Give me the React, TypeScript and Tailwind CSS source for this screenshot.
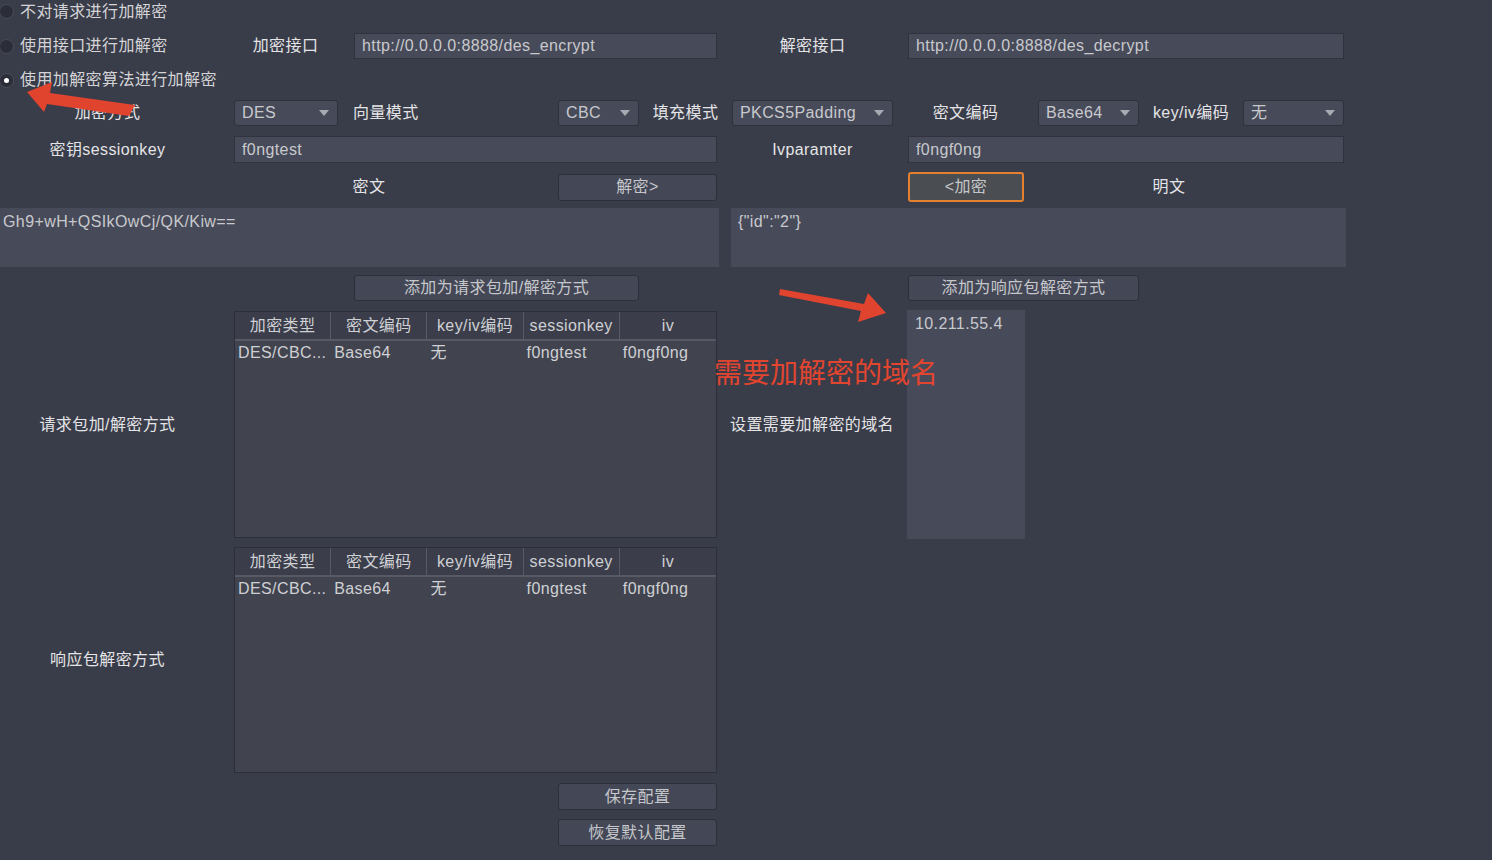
import React from 'react';

const FONT = "font-['Liberation_Sans','Noto_Sans_CJK_SC',sans-serif]";

function Radio({ checked = false, label }: { checked?: boolean; label: string }) {
  return (
    <div className="flex items-center gap-[6px]">
      <span className="flex h-[15px] w-[15px] -ml-[1px] items-center justify-center rounded-full border border-[#4b4e59] bg-[#2b2e39]">
        {checked && <span className="h-[5px] w-[5px] rounded-full bg-white" />}
      </span>
      <span className="text-[#d4d4d6]">{label}</span>
    </div>
  );
}

function Label({ w, text, className = '' }: { w: string; text: string; className?: string }) {
  return (
    <div className={`flex h-full shrink-0 items-center justify-center text-[#e4e4e6] ${w} ${className}`}>
      {text}
    </div>
  );
}

function Input({ w, value }: { w: string; value: string }) {
  return (
    <div className={`flex h-full shrink-0 items-center border border-[#30333e] bg-[#474a59] px-[7px] text-[#c8c9cd] ${w}`}>
      {value}
    </div>
  );
}

function Select({ w, value }: { w: string; value: string }) {
  return (
    <div className={`flex h-full shrink-0 items-center justify-between rounded-[3px] border border-[#2e313c] bg-[#474a59] pl-[7px] pr-[8px] text-[#c8c9cd] ${w}`}>
      <span>{value}</span>
      <svg width="10" height="6" viewBox="0 0 10 6">
        <path d="M0 0 L10 0 L5 6 Z" fill="#a8aab2" />
      </svg>
    </div>
  );
}

function Button({ w, text, h = 'h-[27px]' }: { w: string; text: string; h?: string }) {
  return (
    <div className={`flex shrink-0 items-center justify-center rounded-[3px] border border-[#2c2f3a] bg-[#444756] text-[#c6c7cb] ${w} ${h}`}>
      {text}
    </div>
  );
}

const HEADERS = ['加密类型', '密文编码', 'key/iv编码', 'sessionkey', 'iv'];
const ROW = ['DES/CBC...', 'Base64', '无', 'f0ngtest', 'f0ngf0ng'];

function Table() {
  return (
    <div className="flex h-full w-[483px] shrink-0 flex-col border border-[#2c2f3a] bg-[#41444f]">
      <div className="grid h-[29px] grid-cols-5 border-b-2 border-[#575a65] bg-[#3b3e4a]">
        {HEADERS.map((h, i) => (
          <div
            key={h}
            className={`flex items-center justify-center text-[#cfd0d4] ${i < 4 ? 'border-r border-[#575a65]' : ''}`}
          >
            {h}
          </div>
        ))}
      </div>
      <div className="grid h-[24px] grid-cols-5">
        {ROW.map((c) => (
          <div key={c} className="flex items-center overflow-hidden whitespace-nowrap pl-[3px] text-[#cfd0d4]">
            {c}
          </div>
        ))}
      </div>
    </div>
  );
}

export default function App() {
  return (
    <div className={`relative h-[860px] w-full overflow-hidden bg-[#393c49] text-[16px] leading-none tracking-[0.4px] ${FONT}`}>
      <div className="flex flex-col">
        <div className="flex h-[23px] items-center">
          <Radio label="不对请求进行加解密" />
        </div>

        <div className="mt-[10px] flex h-[26px] items-center">
          <div className="flex w-[217px] shrink-0 items-center">
            <Radio label="使用接口进行加解密" />
          </div>
          <Label w="w-[137px]" text="加密接口" />
          <Input w="w-[363px]" value="http://0.0.0.0:8888/des_encrypt" />
          <Label w="w-[191px]" text="解密接口" />
          <Input w="w-[436px]" value="http://0.0.0.0:8888/des_decrypt" />
        </div>

        <div className="mt-[10px] flex h-[22px] items-center">
          <Radio checked label="使用加解密算法进行加解密" />
        </div>

        <div className="mt-[9px] flex h-[26px] items-center">
          <Label w="w-[234px]" text="加密方式" className="pr-[19px]" />
          <Select w="w-[104px]" value="DES" />
          <Label w="w-[220px]" text="向量模式" className="justify-start pl-[15px]" />
          <Select w="w-[81px]" value="CBC" />
          <Label w="w-[93px]" text="填充模式" />
          <Select w="w-[161px]" value="PKCS5Padding" />
          <Label w="w-[145px]" text="密文编码" />
          <Select w="w-[101px]" value="Base64" />
          <Label w="w-[104px]" text="key/iv编码" />
          <Select w="w-[101px]" value="无" />
        </div>

        <div className="mt-[10px] flex h-[27px] items-center">
          <Label w="w-[234px]" text="密钥sessionkey" className="pr-[19px]" />
          <Input w="w-[483px]" value="f0ngtest" />
          <Label w="w-[191px]" text="Ivparamter" />
          <Input w="w-[436px]" value="f0ngf0ng" />
        </div>

        <div className="mt-[9px] flex h-[30px] items-center">
          <Label w="w-[378px]" text="密文" className="ml-[180px]" />
          <Button w="w-[159px]" text="解密>" />
          <div className="w-[191px] shrink-0" />
          <div className="flex h-[30px] w-[116px] shrink-0 items-center justify-center rounded-[3px] border-2 border-[#e5802f] bg-[#4a4d51] text-[#c6c7cb]">
            &lt;加密
          </div>
          <Label w="w-[290px]" text="明文" />
        </div>

        <div className="mt-[6px] flex h-[59px]">
          <div className="w-[719px] shrink-0 bg-[#474a59] px-[3px] pt-[6px] text-[#c8c9cd]">Gh9+wH+QSIkOwCj/QK/Kiw==</div>
          <div className="ml-[12px] w-[615px] shrink-0 bg-[#474a59] px-[7px] pt-[6px] text-[#c8c9cd]">{'{"id":"2"}'}</div>
        </div>

        <div className="mt-[8px] flex h-[26px] items-center">
          <div className="ml-[354px]" />
          <Button w="w-[285px]" text="添加为请求包加/解密方式" h="h-[26px]" />
          <div className="w-[269px] shrink-0" />
          <Button w="w-[231px]" text="添加为响应包解密方式" h="h-[26px]" />
        </div>

        <div className="mt-[10px] flex h-[227px]">
          <Label w="w-[234px]" text="请求包加/解密方式" className="pr-[19px]" />
          <Table />
          <Label w="w-[190px]" text="设置需要加解密的域名" />
          <div className="-mt-[1px] h-[229px] w-[118px] shrink-0 bg-[#474a59] px-[8px] pt-[6px] text-[#c8c9cd]">10.211.55.4</div>
        </div>

        <div className="mt-[9px] flex h-[226px]">
          <Label w="w-[234px]" text="响应包解密方式" className="pr-[19px]" />
          <Table />
        </div>

        <div className="mt-[10px] flex">
          <div className="ml-[558px]" />
          <Button w="w-[159px]" text="保存配置" />
        </div>
        <div className="mt-[9px] flex">
          <div className="ml-[558px]" />
          <Button w="w-[159px]" text="恢复默认配置" />
        </div>
      </div>

      {/* annotations drawn over the screenshot */}
      <svg className="pointer-events-none absolute left-0 top-0" width="1492" height="860">
        <polygon points="27,92 52,82 50,93 135,105 129,116 47,104 44,112" fill="#e0442f" />
        <polygon points="780,289 864,304 868,293 886,313 858,322 861,311 779,295" fill="#e0442f" />
      </svg>
      <div className="pointer-events-none absolute left-[714px] top-[360px] text-[28px] leading-none tracking-normal text-[#e2452f]">
        需要加解密的域名
      </div>
    </div>
  );
}
